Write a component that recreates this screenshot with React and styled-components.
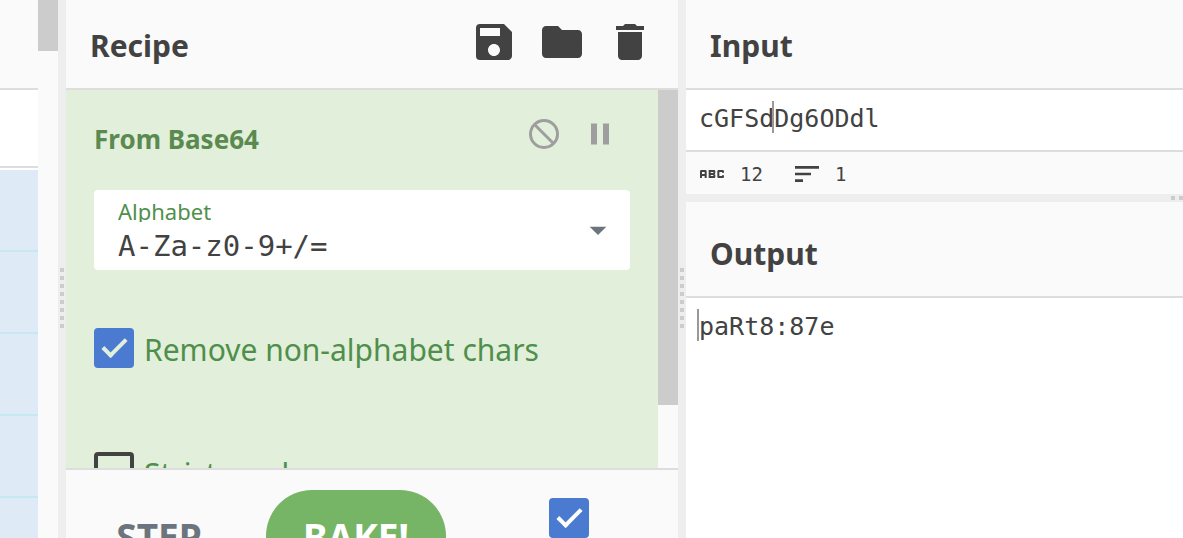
import { useState } from 'react';
import styled, { createGlobalStyle } from 'styled-components';
import { MdSave, MdFolder, MdDelete, MdPause, MdAbc, MdSort, MdArrowDropDown } from 'react-icons/md';

export default function App () {

    const [alphabet, setAlphabet] = useState('A-Za-z0-9+/=');
    const [removeChars, setRemoveChars] = useState(true);
    const [strict, setStrict] = useState(false);
    const [autoBake, setAutoBake] = useState(true);
    const [input, setInput] = useState('cGFSdDg6ODdl');

    return (

        <>

            <GlobalStyle />
            <Workspace>
                <Operations>
                    <OperationList>
                        <SideTitleBar />
                        <SearchArea />
                        {[1, 2, 3, 4, 5].map((n) => <Category key={n} />)}
                    </OperationList>
                    <ScrollTrack><ScrollThumb $size="51px" /></ScrollTrack>
                </Operations>

                <ColumnGutter><GutterDots /></ColumnGutter>

                <Recipe>
                    <TitleBar>
                        <Title>Recipe</Title>
                        <Actions $raised>
                            <IconButton aria-label="Save recipe"><MdSave size={48} /></IconButton>
                            <IconButton aria-label="Load recipe"><MdFolder size={48} /></IconButton>
                            <IconButton aria-label="Clear recipe"><MdDelete size={48} /></IconButton>
                        </Actions>
                    </TitleBar>
                    <RecipeArea>
                        <RecipeOperation>
                            <OperationHeader>
                                <OperationName>From Base64</OperationName>
                                <Actions $muted>
                                    <IconButton aria-label="Disable operation"><DisableIcon /></IconButton>
                                    <IconButton aria-label="Set breakpoint"><MdPause size={36} /></IconButton>
                                </Actions>
                            </OperationHeader>
                            <Argument>
                                <ArgumentField>
                                    <ArgumentLabel htmlFor="alphabet">Alphabet</ArgumentLabel>
                                    <ArgumentInput id="alphabet" spellCheck={false} value={alphabet} onChange={(e) => setAlphabet(e.target.value)} />
                                </ArgumentField>
                                <IconButton aria-label="Choose alphabet"><MdArrowDropDown size={40} /></IconButton>
                            </Argument>
                            <CheckLabel>
                                <Checkbox checked={removeChars} onChange={(e) => setRemoveChars(e.target.checked)} />
                                <CheckText>Remove non-alphabet chars</CheckText>
                            </CheckLabel>
                            <CheckLabel>
                                <Checkbox checked={strict} onChange={(e) => setStrict(e.target.checked)} />
                                <CheckText>Strict mode</CheckText>
                            </CheckLabel>
                        </RecipeOperation>
                        <ScrollTrack><ScrollThumb $size="315px" /></ScrollTrack>
                    </RecipeArea>
                    <Controls>
                        <StepButton>STEP</StepButton>
                        <BakeButton>BAKE!</BakeButton>
                        <AutoBake>
                            <Checkbox $tick="#ffffff" aria-label="Auto Bake" checked={autoBake} onChange={(e) => setAutoBake(e.target.checked)} />
                        </AutoBake>
                    </Controls>
                </Recipe>

                <ColumnGutter><GutterDots /></ColumnGutter>

                <InputOutput>
                    <TitleBar>
                        <Title>Input</Title>
                    </TitleBar>
                    <Editor>
                        <EditorText aria-label="Input" rows={1} spellCheck={false} value={input} onChange={(e) => setInput(e.target.value)} />
                        <Caret $column={5} />
                    </Editor>
                    <StatusBar>
                        <MdAbc size={32} />
                        <StatusValue>{input.length}</StatusValue>
                        <MdSort size={32} />
                        <StatusValue>{input.split('\n').length}</StatusValue>
                    </StatusBar>
                    <RowGutter><GutterDots $horizontal /></RowGutter>
                    <TitleBar $tall>
                        <Title>Output</Title>
                    </TitleBar>
                    <Editor $fill>
                        <EditorText aria-label="Output" rows={1} spellCheck={false} readOnly value="paRt8:87e" />
                        <Caret $column={0} />
                    </Editor>
                </InputOutput>
            </Workspace>

        </>

    );

}

function DisableIcon () {

    return (
        <svg width="36" height="36" viewBox="0 0 36 36" fill="none" stroke="currentColor" strokeWidth="3">
            <circle cx="18" cy="18" r="13.5" />
            <path d="M8.5 8.5l19 19" />
        </svg>
    );

}

const GlobalStyle = createGlobalStyle`

    *,
    *::before {
        box-sizing: border-box;
    }

    body {
        margin: 0;
        overflow: hidden;
        font-family: 'Noto Sans', 'Open Sans', sans-serif;
        color: #424242;
        background: #fafafa;
    }

`;

const Workspace = styled.main`

    display: flex;
    height: 100vh;
    overflow: hidden;

`;

const Operations = styled.section`

    flex: none;
    display: flex;
    width: 58px;

`;

const OperationList = styled.div`

    flex: 1;
    background: #ffffff;

`;

const SideTitleBar = styled.div`

    height: 90px;
    background: #fafafa;
    border-bottom: 2px solid #dddddd;

`;

const SearchArea = styled.div`

    height: 78px;
    margin-bottom: 2px;
    border-bottom: 2px solid #dddddd;

`;

const Category = styled.div`

    height: 82px;
    background: #deebf7;
    border-bottom: 2px solid #c5e8f3;

`;

const ScrollTrack = styled.div`

    flex: none;
    width: 20px;
    background: #fafafa;

`;

const ScrollThumb = styled.div`

    height: ${(props) => props.$size};
    background: #cccccc;

`;

const ColumnGutter = styled.div`

    flex: none;
    display: flex;
    align-items: center;
    justify-content: center;
    width: 8px;
    padding-top: 58px;
    background: #eeeeee;
    cursor: col-resize;

`;

const RowGutter = styled.div`

    flex: none;
    display: flex;
    align-items: center;
    justify-content: flex-end;
    height: 8px;
    background: #eeeeee;
    cursor: row-resize;

`;

const GutterDots = styled.div`

    width: ${(props) => (props.$horizontal ? '12px' : '4px')};
    height: ${(props) => (props.$horizontal ? '4px' : '60px')};
    background: repeating-linear-gradient(
        ${(props) => (props.$horizontal ? 'to right' : 'to bottom')},
        #cccccc 0 4px,
        transparent 4px 8px
    );

`;

const Recipe = styled.section`

    flex: 612 1 0;
    display: flex;
    flex-direction: column;
    min-width: 0;

`;

const InputOutput = styled.section`

    flex: 497 1 0;
    display: flex;
    flex-direction: column;
    min-width: 0;

`;

const TitleBar = styled.header`

    flex: none;
    display: flex;
    align-items: center;
    justify-content: space-between;
    height: ${(props) => (props.$tall ? '96px' : '90px')};
    padding: 0 24px;
    padding-top: ${(props) => (props.$tall ? '6px' : '0')};
    background: #fafafa;
    border-bottom: 2px solid #dddddd;

`;

const Title = styled.h2`

    margin: 0;
    padding-top: 4px;
    font-size: 30px;
    font-weight: 700;
    line-height: 40px;

`;

const Actions = styled.div`

    display: flex;
    gap: 20px;
    padding-right: ${(props) => (props.$muted ? '12px' : '0')};
    padding-bottom: ${(props) => (props.$raised ? '4px' : '0')};
    color: ${(props) => (props.$muted ? '#9e9e9e' : '#424242')};

`;

const Button = styled.button`

    padding: 0;
    border: none;
    background: none;
    color: inherit;
    font-family: inherit;
    cursor: pointer;

`;

const IconButton = styled(Button)`

    display: flex;
    align-self: flex-start;

`;

const RecipeArea = styled.div`

    flex: 1;
    display: flex;
    min-height: 0;
    overflow: hidden;

`;

const RecipeOperation = styled.div`

    flex: 1;
    min-width: 0;
    padding: 26px 28px;
    background: #e2efda;
    color: #4f8f4b;

`;

const OperationHeader = styled.div`

    display: flex;
    justify-content: space-between;
    height: 74px;

`;

const OperationName = styled.h3`

    margin: 0;
    padding-top: 3px;
    font-size: 26px;
    font-weight: 700;
    line-height: 40px;
    color: #5a8a50;

`;

const Argument = styled.div`

    display: flex;
    align-items: center;
    justify-content: space-between;
    height: 80px;
    margin-bottom: 58px;
    padding: 0 12px 0 24px;
    background: #ffffff;
    border-radius: 4px;

    svg {
        color: #6c757d;
    }

    button {
        align-self: center;
    }

`;

const ArgumentField = styled.div`

    flex: 1;
    display: flex;
    flex-direction: column;

`;

const ArgumentLabel = styled.label`

    height: 32px;
    overflow: hidden;
    font-size: 22px;
    line-height: 42px;

`;

const ArgumentInput = styled.input`

    width: 100%;
    height: 48px;
    padding: 0;
    border: none;
    outline: none;
    background: none;
    font-family: 'DejaVu Sans Mono', monospace;
    font-size: 29px;
    color: #424242;

`;

const CheckLabel = styled.label`

    display: flex;
    align-items: center;
    gap: 10px;
    height: 40px;
    margin-bottom: 84px;

`;

const CheckText = styled.span`

    padding-top: 4px;
    font-size: 30px;
    line-height: 40px;
    white-space: nowrap;

`;

const Checkbox = styled.input.attrs({ type: 'checkbox' })`

    flex: none;
    appearance: none;
    display: grid;
    place-content: center;
    width: 40px;
    height: 40px;
    margin: 0;
    border: 4px solid #424242;
    border-radius: 4px;

    &:checked {
        border-color: #4b7bd0;
        background: #4b7bd0;
    }

    &:checked::before {
        content: '';
        width: 13px;
        height: 24px;
        margin-bottom: 6px;
        border: solid ${(props) => props.$tick || '#e2efda'};
        border-width: 0 4px 4px 0;
        transform: rotate(45deg);
    }

`;

const Controls = styled.footer`

    flex: none;
    display: flex;
    align-items: flex-start;
    height: 70px;
    padding: 20px 28px 0;
    overflow: hidden;
    background: #fafafa;
    border-top: 2px solid #dddddd;

`;

const StepButton = styled(Button)`

    width: 130px;
    height: 92px;
    margin-right: 42px;
    font-size: 37px;
    font-weight: 700;
    color: #6c757d;

`;

const BakeButton = styled(Button)`

    width: 180px;
    height: 92px;
    border-radius: 46px;
    background: #77b566;
    font-size: 37px;
    font-weight: 700;
    color: #ffffff;

`;

const AutoBake = styled.div`

    flex: 1;
    display: flex;
    justify-content: center;
    padding-top: 8px;
    padding-left: 42px;

`;

const Editor = styled.div`

    position: relative;
    flex: ${(props) => (props.$fill ? '1' : 'none')};
    height: 60px;
    padding: 9px 13px 0;
    background: #ffffff;

`;

const EditorText = styled.textarea`

    display: block;
    width: 100%;
    height: 44px;
    padding: 0;
    border: none;
    outline: none;
    resize: none;
    overflow: hidden;
    background: none;
    font-family: 'DejaVu Sans Mono', monospace;
    font-size: 25px;
    line-height: 40px;
    color: #424242;

`;

const Caret = styled.span`

    position: absolute;
    top: 11px;
    left: calc(11px + ${(props) => props.$column}ch);
    width: 2px;
    height: 32px;
    font-family: 'DejaVu Sans Mono', monospace;
    font-size: 25px;
    background: #999999;

`;

const StatusBar = styled.div`

    flex: none;
    display: flex;
    align-items: center;
    height: 44px;
    padding: 2px 10px 0;
    background: #fafafa;
    border-top: 2px solid #dddddd;

`;

const StatusValue = styled.span`

    margin-left: 12px;
    margin-right: 28px;
    font-family: 'DejaVu Sans Mono', monospace;
    font-size: 19px;

`;
